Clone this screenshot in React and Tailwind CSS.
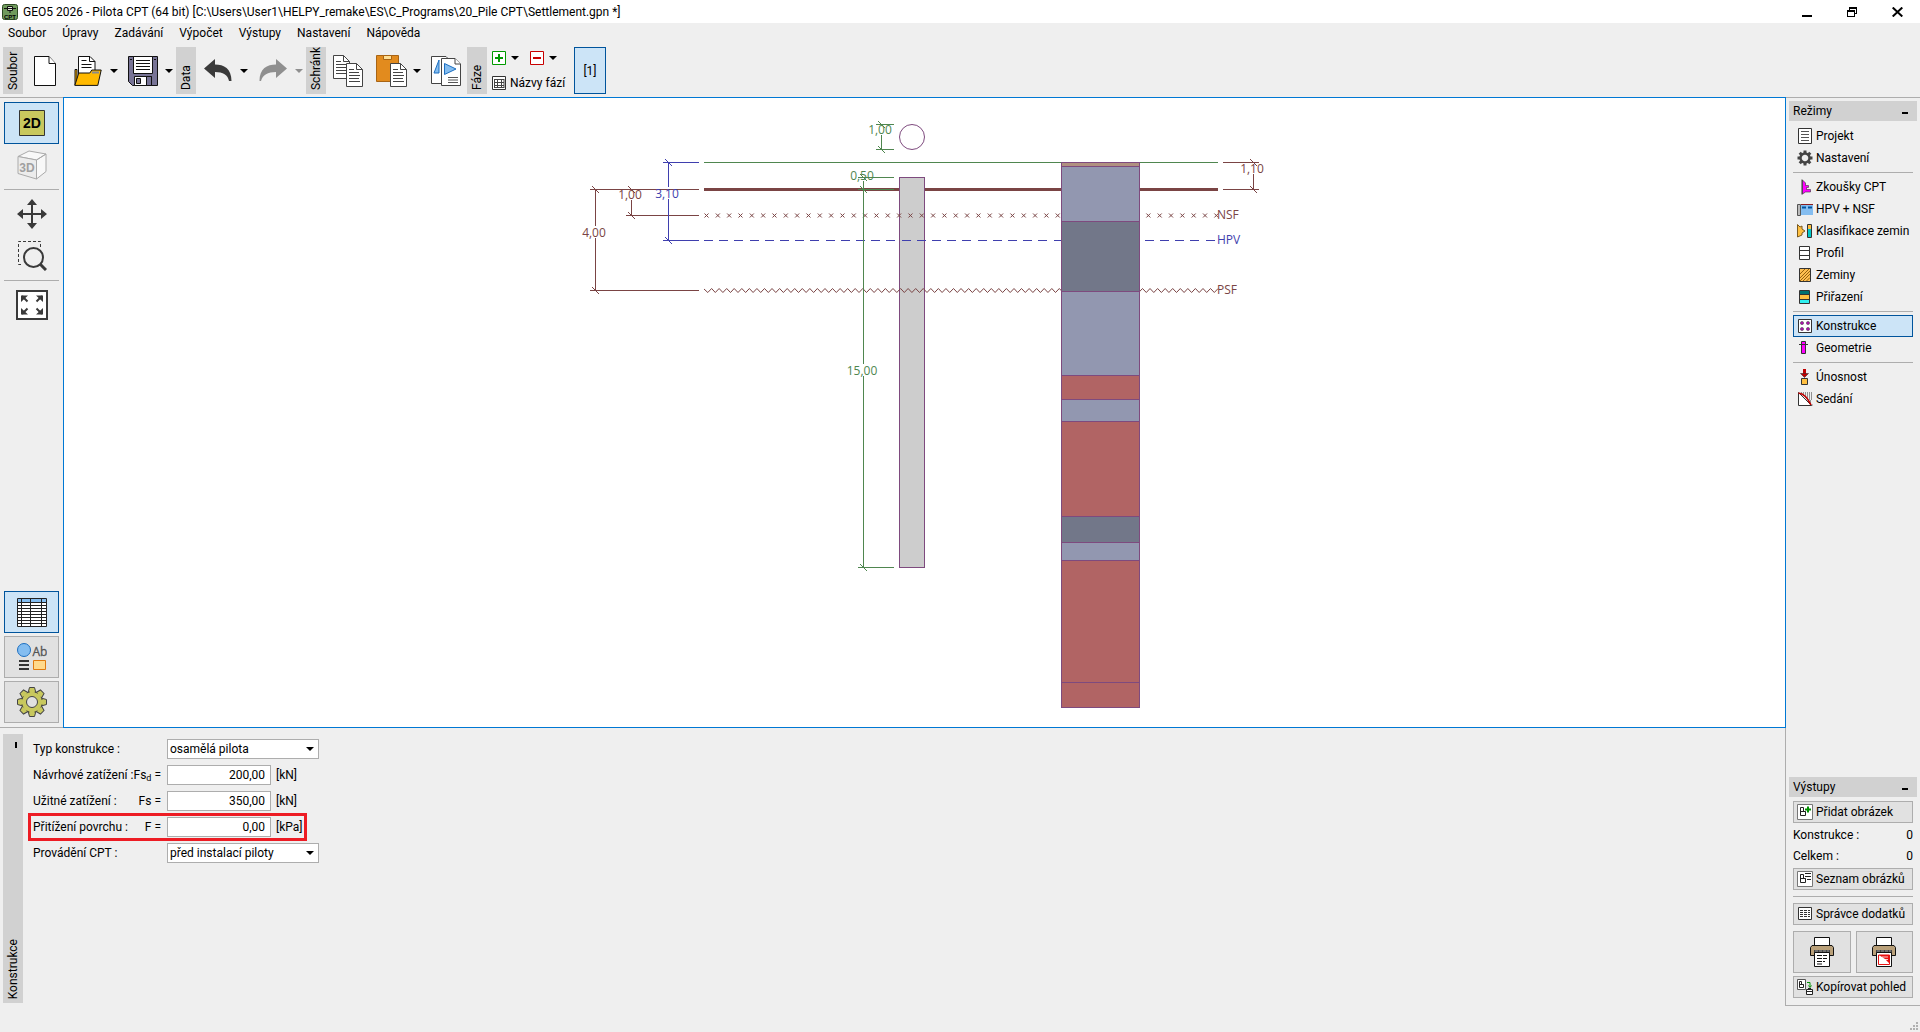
import { useState } from "react";

const menuItems = ["Soubor", "Úpravy", "Zadávání", "Výpočet", "Výstupy", "Nastavení", "Nápověda"];

const BROWN = "#7a4444";
const GREEN = "#4f864f";
const BLUE = "#3f3fae";
const PURPLE = "#7e4a7e";

/* ---------- toolbar icons ---------- */

const NewIcon = () => (
  <svg width="22" height="30" viewBox="0 0 22 30" aria-hidden="true">
    <path d="M.5.5H15l6.5 7v22H.5z" fill="#fff" stroke="#111" />
    <path d="M15 .5v7h6.5" fill="#fff" stroke="#111" />
  </svg>
);

const OpenIcon = () => (
  <svg width="28" height="30" viewBox="0 0 28 30" aria-hidden="true">
    <path d="M4.500.5H16l5 5V18H4.500z" fill="#fff" stroke="#111" />
    <path d="M15.500.5v5H21M7.500 4.500h5M7.500 8.500h10M7.500 11.500h10" fill="none" stroke="#111" />
    <path d="M1 13.500h2V27L1 29z" fill="#ffb200" stroke="#111" />
    <path d="M.8 29.400l4-12.400h11l2-3h9.400l-3.400 15.400z" fill="#ffb900" stroke="#111" />
    <path d="M18 16.500h7" stroke="#8a8a8a" strokeWidth="2" />
  </svg>
);

const SaveIcon = () => (
  <svg width="30" height="30" viewBox="0 0 30 30" aria-hidden="true">
    <path d="M.5.5h29v29H4.500l-4-4z" fill="#787496" stroke="#111" />
    <path d="M5.500.5h19v17h-19z" fill="#fff" stroke="#111" />
    <path d="M8 4.500h14M8 7.500h14M8 10.500h14M8 13.500h14" stroke="#111" />
    <path d="M6.500 20.500h17v9h-17z" fill="#fff" stroke="#111" />
    <path d="M18.500 20.500h5v9h-5z" fill="#787496" stroke="#111" />
    <path d="M8.500 22.500h4v5h-4z" fill="#787496" stroke="#111" />
    <path d="M2 3.500h2M26 3.500h2" stroke="#111" />
  </svg>
);

const UndoIcon = () => (
  <svg width="28" height="24" viewBox="0 0 28 24" aria-hidden="true">
    <path d="M0 9.500L11 0v5.500c9 0 16.500 4 16.500 16.500h-2.500C24 16 19 13 11 13v6z" fill="#3a3a3a" />
  </svg>
);

const RedoIcon = () => (
  <svg width="28" height="24" viewBox="0 0 28 24" aria-hidden="true">
    <path d="M28 9.500L17 0v5.500C8 5.500.5 9.500.5 22H2c1.500-6 7-9 15-9v6z" fill="#8f8f8f" />
  </svg>
);

const Sheet = ({ x, y }) => (
  <g transform={`translate(${x} ${y})`}>
    <path d="M.5.5h10l6 6v17H.5z" fill="#fff" stroke="#444" />
    <path d="M10.500.5v6h6M3 6.500h5M3 9.500h10M3 12.500h11M3 15.500h10M3 18.500h11" fill="none" stroke="#444" />
  </g>
);

const CopyIcon = () => (
  <svg width="30" height="32" viewBox="0 0 30 32" aria-hidden="true">
    <Sheet x={0} y={0} />
    <Sheet x={13} y={8} />
  </svg>
);

const PasteIcon = () => (
  <svg width="31" height="32" viewBox="0 0 31 32" aria-hidden="true">
    <path d="M.5.5h22v26H.5z" fill="#e28b1e" stroke="#a86414" />
    <path d="M7.500.5h8v4h-8z" fill="#ffdf94" stroke="#a86414" />
    <Sheet x={14} y={8} />
  </svg>
);

const GalleryIcon = () => (
  <svg width="30" height="30" viewBox="0 0 30 30" aria-hidden="true">
    <path d="M.5.5H15l5 5v22H.5z" fill="#fff" stroke="#444" />
    <path d="M3 17L8 4v13z" fill="#84bdf0" stroke="#1d6fc0" />
    <path d="M10.500 2.500H24l5.500 5.500v21.500h-19z" fill="#fff" stroke="#444" />
    <path d="M24 2.500V8h5.500" fill="#fff" stroke="#444" />
    <path d="M13.500 7.500v11L25 13z" fill="#84bdf0" stroke="#1d6fc0" />
    <path d="M17 21.500h10M17 24h10M17 26.500h10" stroke="#555" />
  </svg>
);

const Caret = ({ color = "#000" }) => (
  <svg width="8" height="4" viewBox="0 0 8 4" aria-hidden="true">
    <path d="M0 0h8L4 4z" fill={color} />
  </svg>
);

const PhaseSign = ({ color, plus }) => (
  <svg width="14" height="14" viewBox="0 0 14 14" aria-hidden="true">
    <path d="M.5.5h13v13H.5z" fill="#fff" stroke={color} />
    <path d={plus ? "M3 7h8M7 3v8" : "M3 7h8"} stroke={color} strokeWidth="2" />
  </svg>
);

const TableIcon = () => (
  <svg width="14" height="14" viewBox="0 0 14 14" aria-hidden="true">
    <path d="M.5.5h13v13H.5z" fill="#fff" stroke="#333" />
    <path d="M2 3.500h10M2 6.500h10M2 9.500h10M2.500 3v9M5.500 3v9M9.500 3v9M12 3v9M2 11.500h10" stroke="#444" />
  </svg>
);

/* ---------- left bar icons ---------- */

const View2D = () => (
  <svg width="26" height="26" viewBox="0 0 26 26" aria-hidden="true">
    <path d="M.5.5h25v25H.5z" fill="#c8c85e" stroke="#333" />
    <text x="13" y="18" textAnchor="middle" fontSize="14" fontWeight="700" fontFamily="Liberation Sans, sans-serif">2D</text>
  </svg>
);

const View3D = () => (
  <svg width="30" height="30" viewBox="0 0 30 30" aria-hidden="true">
    <path d="M1 6.500L12 1l17 3-9.500 6zM19.500 10L29 4v17.500L19.500 29z" fill="#f8f8f8" stroke="#aaa" />
    <path d="M1 6.500l18.500 3.500v19L1 23.500z" fill="#ececec" stroke="#aaa" />
    <text x="10" y="22" textAnchor="middle" fontSize="12" fontWeight="700" fill="#a0a0a0" fontFamily="Liberation Sans, sans-serif">3D</text>
  </svg>
);

const MoveIcon = () => (
  <svg width="30" height="30" viewBox="0 0 30 30" aria-hidden="true">
    <path d="M15 4v22M4 15h22" stroke="#3a3a3a" strokeWidth="2" />
    <path d="M15 0l5 6H10zM15 30l5-6H10zM0 15l6-5v10zM30 15l-6-5v10z" fill="#3a3a3a" />
  </svg>
);

const ZoomIcon = () => (
  <svg width="30" height="30" viewBox="0 0 30 30" aria-hidden="true">
    <path d="M23.500 6V.5H1.500v23H6" fill="none" stroke="#3a3a3a" strokeDasharray="3 2" />
    <circle cx="16.500" cy="16.500" r="9.500" fill="none" stroke="#3a3a3a" strokeWidth="2" />
    <path d="M23 23l6 6" stroke="#3a3a3a" strokeWidth="3" />
  </svg>
);

const FitIcon = () => (
  <svg width="32" height="30" viewBox="0 0 32 30" aria-hidden="true">
    <path d="M1 1h30v28H1z" fill="#fff" stroke="#3a3a3a" strokeWidth="2" />
    <path d="M6 6l5.500 5.500M26 6l-5.500 5.500M6 24l5.500-5.500M26 24l-5.500-5.500" stroke="#3a3a3a" strokeWidth="2" />
    <path d="M5 5.500h7L5 12zM27 5.500h-7l7 6.500zM5 24.500h7L5 18zM27 24.500h-7l7-6.500z" fill="#3a3a3a" />
  </svg>
);

const GridIcon = () => (
  <svg width="30" height="29" viewBox="0 0 30 29" aria-hidden="true">
    <path d="M.5.5h29v28H.5z" fill="#fff" stroke="#222" />
    <path d="M1 1h28v3.500H1z" fill="#84bdf0" />
    <path d="M0 4.500h30M0 7.500h30M0 10.500h30M0 13.500h30M0 16.500h30M0 19.500h30M0 22.500h30M0 25.500h30M4.500 0v29M13.500 0v29M24.500 0v29" stroke="#222" />
  </svg>
);

const StyleIcon = () => (
  <svg width="30" height="28" viewBox="0 0 30 28" aria-hidden="true">
    <circle cx="7" cy="7" r="6.500" fill="#84bdf0" stroke="#1d6fc0" />
    <text x="15.500" y="13" fontSize="12" fill="#555" stroke="#555" strokeWidth=".3" fontFamily="Open Sans, sans-serif">Ab</text>
    <path d="M2 18h10M2 22h10M2 26h10" stroke="#333" strokeWidth="2" />
    <path d="M16.500 17.500h12v9h-12z" fill="#ffd98c" stroke="#e07a10" />
  </svg>
);

const gearTeeth = [0, 45, 90, 135, 180, 225, 270, 315];

const GearIcon = () => (
  <svg width="30" height="30" viewBox="-15 -15 30 30" aria-hidden="true">
    {gearTeeth.map((a) => (
      <path key={a} d="M-4-9l1.500-5.500h5L4-9z" transform={`rotate(${a})`} fill="#c8c85e" stroke="#444" />
    ))}
    <circle r="10.300" fill="#c8c85e" stroke="#444" strokeDasharray="3.200 4.890" strokeDashoffset="-2.400" />
    <circle r="9.700" fill="#c8c85e" />
    <circle r="5.500" fill="#e1e1e1" stroke="#444" />
  </svg>
);

/* ---------- mode icons, all on a 16px box ---------- */

const modeIcons = {
  project: (
    <>
      <path d="M1.500.5h13v15h-13z" fill="#fff" stroke="#333" />
      <path d="M4 3.500h8M4 6.500h8M4 9.500h8M4 12.500h8" stroke="#555" />
    </>
  ),
  settings: (
    <g transform="translate(8 8)">
      {gearTeeth.map((a) => (
        <path key={a} d="M-1.500-7.500h3v4h-3z" transform={`rotate(${a})`} fill="#444" />
      ))}
      <circle r="4.500" fill="#efefef" stroke="#444" strokeWidth="2.400" />
    </g>
  ),
  cpt: (
    <>
      <path d="M5.500 1l3 3v2.500h3v2H9.500v2h4v2.500h-5l-3 2z" fill="#f0f" stroke="#333" strokeWidth=".6" />
      <path d="M5 .5v15" stroke="#333" strokeWidth="1" />
    </>
  ),
  water: (
    <>
      <path d="M4 4h12v10H4z" fill="#84bdf0" />
      <path d="M4 3.500h12" stroke="#8c1c1c" />
      <path d="M5 6.500h11" stroke="#0054a0" strokeWidth="2" strokeDasharray="4 2" />
      <path d="M.5 3.500h3v11h-3z" fill="#bbb" stroke="#555" />
    </>
  ),
  classify: (
    <>
      <path d="M.5 1.500L3 4l2-1v3l3 2-3 2v2l-4.500 2z" fill="#ffc040" stroke="#7a5a20" />
      <path d="M11 2h4v12h-4z" fill="#00c8c8" />
      <path d="M11 2h4v4h-4z" fill="#ffc040" />
      <path d="M10.500 1.500h4v13h-4z" fill="none" stroke="#333" />
    </>
  ),
  profile: <path d="M2.500 1.500h10v13h-10zM2.500 5.500h10M2.500 10.500h10" fill="#fff" stroke="#333" />,
  soils: (
    <>
      <path d="M2.500 1.500h11v13h-11z" fill="#ffbf50" stroke="#333" />
      <path d="M3 7l5-5M3 11l9-9M3 14l10-10M6 14l7-7M9.500 14l3.500-3.500" stroke="#7a4a00" strokeWidth=".8" />
    </>
  ),
  assign: (
    <>
      <path d="M3 2h9v4H3z" fill="#007070" />
      <path d="M3 6h9v4H3z" fill="#ffc040" />
      <path d="M3 10h9v4H3z" fill="#30f0f0" />
      <path d="M2.500 1.500h10v13h-10zM2.500 5.500h10M2.500 10.500h10" fill="none" stroke="#333" />
    </>
  ),
  structure: (
    <>
      <path d="M1.500 1.500h13v13h-13z" fill="#fff" stroke="#333" />
      <g fill="#b010b0" stroke="#333" strokeWidth=".5">
        <circle cx="5" cy="5" r="1.600" />
        <circle cx="11" cy="5" r="1.600" />
        <circle cx="5" cy="11" r="1.600" />
        <circle cx="11" cy="11" r="1.600" />
      </g>
    </>
  ),
  geometry: (
    <>
      <path d="M4.500 1.500h4v12h-4z" fill="#f0f" stroke="#333" />
      <path d="M2 4.500h9" stroke="#333" />
    </>
  ),
  bearing: (
    <>
      <path d="M7.500 0v6" stroke="#c00000" strokeWidth="3" />
      <path d="M3.500 4.500h8l-4 4z" fill="#c00000" stroke="#333" strokeWidth=".6" />
      <path d="M4.500 9.500h6v6h-6z" fill="#ffbf40" stroke="#333" />
    </>
  ),
  settlement: (
    <>
      <path d="M1.500 1.500v13h13z" fill="#fff" stroke="#333" />
      <path d="M4 2h11M6 4h9M8 6h7M10 8h5M11 10h4M13 12h2M14.500 14h1" stroke="#333" strokeDasharray="1 1" />
      <path d="M1.500 2c6 1 9 5 12.500 12" fill="none" stroke="#c00000" strokeWidth="1.600" />
    </>
  ),
  addPicture: (
    <>
      <path d="M.5.5h15v15H.5z" fill="#fff" stroke="#777" />
      <path d="M3.500 3.500h3v4h2v4h-5zM3.500 7.500h5" fill="none" stroke="#222" />
      <path d="M8 5.500h6M11 2.500v6" stroke="#009000" strokeWidth="2" />
    </>
  ),
  list: (
    <>
      <path d="M.5.5h15v15H.5z" fill="#fff" stroke="#777" />
      <path d="M3.500 3.500h3v4h2v4h-5zM3.500 7.500h5M8 2.500h6M8 5.500h6M10 8.500h4" fill="none" stroke="#222" />
    </>
  ),
  annex: (
    <>
      <path d="M1.500 1.500h13v12h-13z" fill="#fff" stroke="#333" />
      <path d="M3 4.500h10M3 6.500h10M3 8.500h10M3 10.500h10" stroke="#333" strokeDasharray="3 1" />
    </>
  ),
  copyView: (
    <>
      <path d="M.5.5h8v10h-8z" fill="#fff" stroke="#555" />
      <path d="M2.500 2.500h2v3h2v3h-4zM2.500 5.500h4" fill="none" stroke="#222" />
      <path d="M10 3.500h3v4M11.500 6.500l1.500 2 1.500-2" fill="none" stroke="#009000" />
      <path d="M9.500 10.500h6v5h-6zM9.500 12.500h6M11 9.500h3" fill="#fff" stroke="#222" />
    </>
  ),
};

const ModeIcon = ({ name }) => (
  <svg width="16" height="16" viewBox="0 0 16 16" className="shrink-0" aria-hidden="true">
    {modeIcons[name]}
  </svg>
);

const PrinterIcon = ({ red }) => (
  <svg width="24" height="30" viewBox="0 0 24 30" aria-hidden="true">
    <path d="M4.500.5h15v9h-15z" fill="#fff" stroke="#111" />
    <path d="M2 8.500h20l1.500 2v8h-23v-8z" fill="#b9a079" stroke="#111" />
    <path d="M4 13h16v5H4z" fill="#444" />
    <path d="M5 14h14" stroke="#999" strokeDasharray="3 1" />
    <path d="M4.500 15.500h15v14h-15z" fill="#fff" stroke="#111" />
    {red ? (
      <>
        <path d="M6.500 18v9.500h11V18z" fill="none" stroke="#e81010" />
        <path d="M7 18h10.500v8.500L13 22z" fill="#e81010" />
        <path d="M10 20h6M12 22.500h4" stroke="#fff" strokeWidth=".8" />
      </>
    ) : (
      <path d="M7 18.500h10M7 21.500h10M7 24.500h8M7 27h6" stroke="#111" strokeDasharray="5 1" />
    )}
  </svg>
);

const modeGroups = [
  [
    { icon: "project", label: "Projekt" },
    { icon: "settings", label: "Nastavení" },
  ],
  [
    { icon: "cpt", label: "Zkoušky CPT" },
    { icon: "water", label: "HPV + NSF" },
    { icon: "classify", label: "Klasifikace zemin" },
    { icon: "profile", label: "Profil" },
    { icon: "soils", label: "Zeminy" },
    { icon: "assign", label: "Přiřazení" },
  ],
  [
    { icon: "structure", label: "Konstrukce" },
    { icon: "geometry", label: "Geometrie" },
  ],
  [
    { icon: "bearing", label: "Únosnost" },
    { icon: "settlement", label: "Sedání" },
  ],
];

/* ---------- drawing ---------- */

const layers = [
  { top: 162, bottom: 166, fill: "#b09080" },
  { top: 166, bottom: 221, fill: "#9297b0" },
  { top: 221, bottom: 291, fill: "#727789" },
  { top: 291, bottom: 375, fill: "#9297b0" },
  { top: 375, bottom: 399, fill: "#b16464" },
  { top: 399, bottom: 421, fill: "#9297b0" },
  { top: 421, bottom: 516, fill: "#b16464" },
  { top: 516, bottom: 542, fill: "#727789" },
  { top: 542, bottom: 560, fill: "#9297b0" },
  { top: 560, bottom: 682, fill: "#b16464" },
  { top: 682, bottom: 707, fill: "#b16464" },
];

// vertical dimension: x of the line, ends y1/y2, extension lines from x-5 to `to`
const dimensions = [
  { x: 595, y1: 189, y2: 290, to: 699, text: "4,00", ty: 237, color: BROWN },
  { x: 631, y1: 189, y2: 215, to: 699, text: "1,00", ty: 199, color: BROWN },
  { x: 668, y1: 162, y2: 240, to: 699, text: "3,10", ty: 198, color: BLUE },
  { x: 881, y1: 124, y2: 149, to: 894, text: "1,00", ty: 134, color: GREEN },
  { x: 863, y1: 177, y2: 189, to: 894, text: "0,50", ty: 180, color: GREEN },
  { x: 863, y1: 189, y2: 567, to: 894, text: "15,00", ty: 375, color: GREEN },
];

const Tick = ({ x, y, color }) => (
  <path d={`M${x - 3} ${y - 3}l7 7`} stroke={color} fill="none" />
);

const Dimension = ({ x, y1, y2, to, text, ty, color }) => (
  <g>
    <path d={`M${x + 0.5} ${y1}V${Math.max(ty - 11, y1)}M${x + 0.5} ${ty + 1}V${Math.max(y2, ty + 1)}`} stroke={color} shapeRendering="crispEdges" />
    <path d={`M${x - 5} ${y1 + 0.5}H${to}M${x - 5} ${y2 + 0.5}H${to}`} stroke={color} shapeRendering="crispEdges" />
    <Tick x={x} y={y1} color={color} />
    <Tick x={x} y={y2} color={color} />
    <text x={x - 1} y={ty} textAnchor="middle" fill={color}>{text}</text>
  </g>
);

const crosses = Array.from({ length: 46 }, (_, i) => 706.5 + i * 11.33)
  .map((x) => `M${x - 2} 213.500l4 4M${x - 2} 217.500l4-4`)
  .join("");

const zigzag =
  "M704 289" +
  Array.from({ length: 68 }, (_, i) => `L${(704 + (i * 2 + 1) * 3.78).toFixed(1)} 292.500L${(704 + (i * 2 + 2) * 3.78).toFixed(1)} 288.500`).join("");

const Drawing = () => (
  <svg viewBox="64 98 1721 629" className="block h-full w-full" fontSize="12" fontFamily="Open Sans, sans-serif" role="img" aria-label="Konstrukce">
    <g shapeRendering="crispEdges">
      <path d="M704 162.500H1218" stroke={GREEN} />
      <path d="M704 189.500H1218" stroke={BROWN} strokeWidth="3" />
      <path d="M899.500 177.500h25v390h-25z" fill="#cdcdcd" stroke={PURPLE} />
      <path d="M704 240.500H1218" stroke={BLUE} strokeDasharray="9 6.200" />
    </g>
    <circle cx="912" cy="137" r="12.500" fill="#fff" stroke={PURPLE} />
    <path d={crosses} stroke={BROWN} />
    <path d={zigzag} fill="none" stroke={BROWN} />

    {dimensions.map((d) => (
      <Dimension key={`${d.x}-${d.text}`} {...d} />
    ))}

    <g shapeRendering="crispEdges">
      {layers.map((l) => (
        <rect key={l.top} x="1061.5" y={l.top + 0.5} width="78" height={l.bottom - l.top} fill={l.fill} stroke={PURPLE} />
      ))}
      <path d="M1223 162.500h36M1223 189.500h36M1253.500 174v15" stroke={BROWN} />
    </g>
    <Tick x={1253} y={162} color={BROWN} />
    <Tick x={1253} y={189} color={BROWN} />
    <text x="1252" y="173" textAnchor="middle" fill={BROWN}>1,10</text>
    <text x="1217" y="219" fill={BROWN}>NSF</text>
    <text x="1217" y="244" fill={BLUE}>HPV</text>
    <text x="1217" y="294" fill={BROWN}>PSF</text>
  </svg>
);

/* ---------- building blocks ---------- */

const VerticalTab = ({ children }) => (
  <div className="flex w-5 shrink-0 justify-center bg-[#d1d1d1]">
    <span className="rotate-180 pt-1 leading-5 whitespace-nowrap [writing-mode:vertical-rl]">{children}</span>
  </div>
);

const ToolButton = ({ label, children, menu, disabled }) => (
  <div className="flex">
    <button type="button" aria-label={label} disabled={disabled} className="flex w-10 items-center justify-center">
      {children}
    </button>
    {menu && (
      <button type="button" aria-label={`${label} – nabídka`} disabled={disabled} className="flex w-3 items-center justify-center">
        <Caret color={disabled ? "#8f8f8f" : "#000"} />
      </button>
    )}
  </div>
);

const ToolGroup = ({ title, children }) => (
  <>
    <VerticalTab>{title}</VerticalTab>
    <div className="flex gap-[3px] pr-px pl-[2px]">{children}</div>
  </>
);

const SideButton = ({ label, active, framed, children }) => (
  <button
    type="button"
    aria-label={label}
    className={`flex h-[42px] w-full shrink-0 items-center justify-center border ${
      active ? "border-[#00549c] bg-[#cce4f7]" : framed ? "border-[#adadad] bg-[#e1e1e1]" : "border-transparent"
    }`}
  >
    {children}
  </button>
);

const PanelHeader = ({ children }) => (
  <div className="flex h-5 shrink-0 items-center justify-between bg-[#d1d1d1] px-1">
    <h2>{children}</h2>
    <button type="button" aria-label={`Sbalit ${children}`} className="flex h-5 w-4 items-center justify-center pt-1">
      <span className="h-[2px] w-[6px] bg-black" />
    </button>
  </div>
);

const OutputButton = ({ icon, children }) => (
  <button type="button" className="flex h-[22px] w-full items-center gap-[3px] border border-[#adadad] bg-[#e1e1e1] pl-[3px] whitespace-nowrap">
    <ModeIcon name={icon} />
    {children}
  </button>
);

const SelectField = ({ id, label, options }) => (
  <div className="flex h-5 items-center pl-[5px]">
    <label htmlFor={id} className="w-[134px]">{label}</label>
    <div className="relative">
      <select id={id} className="block h-5 w-[152px] appearance-none border border-[#adadad] bg-white pl-[2px] leading-4">
        {options.map((o) => (
          <option key={o}>{o}</option>
        ))}
      </select>
      <span className="pointer-events-none absolute top-2 right-[5px]">
        <Caret />
      </span>
    </div>
  </div>
);

const NumberField = ({ id, label, symbol, unit, initial, marked }) => {
  const [value, setValue] = useState(initial);
  return (
    <div className="relative flex h-5 items-center pl-[5px]">
      {marked && <div className="pointer-events-none absolute -inset-y-1 left-0 w-[279px] border-3 border-[#ed1c24]" />}
      <label htmlFor={id} className="flex w-[134px] justify-between pr-[6px] whitespace-nowrap">
        <span>{label}</span>
        <span>{symbol} =</span>
      </label>
      <input
        id={id}
        value={value}
        onChange={(e) => setValue(e.target.value)}
        className="h-5 w-[104px] border border-[#adadad] bg-white pr-[5px] text-right"
      />
      <span className="pl-[5px]">{unit}</span>
    </div>
  );
};

const App = () => {
  const [activeMode, setActiveMode] = useState("Konstrukce");

  return (
    <div className="flex min-h-screen flex-col bg-[#efefef] font-[Roboto,sans-serif] text-[12px] leading-4 text-black">
      <header className="flex h-[23px] items-center justify-between bg-white pr-[17px] pl-[2px]">
        <div className="flex items-center gap-[5px]">
          <svg width="16" height="16" viewBox="0 0 16 16" aria-hidden="true">
            <rect x=".5" y=".5" width="15" height="15" rx="2" fill="#6f9a5c" stroke="#2c4a22" />
            <path d="M2 4.500h12M5.500 2.500h5v4h-5zM8 6.500V9" fill="#dfe8d8" stroke="#111" />
            <text x="8" y="14.500" textAnchor="middle" fontSize="6" fontWeight="700" fontFamily="Liberation Sans, sans-serif">CPT</text>
          </svg>
          <h1>GEO5 2026 - Pilota CPT (64 bit) [C:\Users\User1\HELPY_remake\ES\C_Programs\20_Pile CPT\Settlement.gpn *]</h1>
        </div>
        <div className="flex items-center gap-[35px]">
          <button type="button" aria-label="Minimalizovat">
            <svg width="10" height="10" viewBox="0 0 10 10"><path d="M0 9h10" stroke="#000" strokeWidth="2" /></svg>
          </button>
          <button type="button" aria-label="Obnovit">
            <svg width="10" height="10" viewBox="0 0 10 10" shapeRendering="crispEdges">
              <path d="M.5 3.500h7v6h-7zM.5 4h7M2.500 3V.5h7v6H8M2.500 1h7" fill="none" stroke="#000" />
            </svg>
          </button>
          <button type="button" aria-label="Zavřít">
            <svg width="11" height="10" viewBox="0 0 11 10"><path d="M.7.5l9.600 9M10.300.5l-9.600 9" stroke="#000" strokeWidth="2" /></svg>
          </button>
        </div>
      </header>

      <nav className="flex h-5 items-center gap-4 pl-2">
        {menuItems.map((item) => (
          <button type="button" key={item}>{item}</button>
        ))}
      </nav>

      <div className="flex h-[54px] pt-1 pb-[3px] pl-[3px]">
        <ToolGroup title="Soubor">
          <ToolButton label="Nový"><NewIcon /></ToolButton>
          <ToolButton label="Otevřít" menu><OpenIcon /></ToolButton>
          <ToolButton label="Uložit" menu><SaveIcon /></ToolButton>
        </ToolGroup>
        <ToolGroup title="Data">
          <ToolButton label="Zpět" menu><UndoIcon /></ToolButton>
          <ToolButton label="Znovu" menu disabled><RedoIcon /></ToolButton>
        </ToolGroup>
        <ToolGroup title="Schránk">
          <ToolButton label="Kopírovat"><CopyIcon /></ToolButton>
          <ToolButton label="Vložit" menu><PasteIcon /></ToolButton>
          <ToolButton label="Vložit obrázek"><GalleryIcon /></ToolButton>
        </ToolGroup>
        <VerticalTab>Fáze</VerticalTab>
        <div className="flex w-[87px] flex-col justify-between pt-1 pb-[3px] pl-[5px]">
          <div className="flex items-center gap-[5px]">
            <button type="button" aria-label="Přidat fázi"><PhaseSign color="#009a00" plus /></button>
            <button type="button" aria-label="Přidat fázi – nabídka" className="mr-[6px]"><Caret /></button>
            <button type="button" aria-label="Odebrat fázi"><PhaseSign color="#c80000" /></button>
            <button type="button" aria-label="Odebrat fázi – nabídka"><Caret /></button>
          </div>
          <button type="button" className="flex items-center gap-1 whitespace-nowrap">
            <TableIcon />
            Názvy fází
          </button>
        </div>
        <button type="button" className="w-8 border border-[#00549c] bg-[#cce4f7]">[1]</button>
      </div>

      <div className="flex grow">
        <div className="flex min-w-0 grow flex-col">
          <div className="flex grow">
            <aside className="flex w-[63px] shrink-0 flex-col border-y border-[#adadad] px-1 pt-1 pb-1">
              <SideButton label="2D" active><View2D /></SideButton>
              <SideButton label="3D"><View3D /></SideButton>
              <hr className="my-[3px] border-[#adadad]" />
              <SideButton label="Posun"><MoveIcon /></SideButton>
              <SideButton label="Lupa"><ZoomIcon /></SideButton>
              <hr className="my-[3px] border-[#adadad]" />
              <SideButton label="Celý výkres"><FitIcon /></SideButton>
              <div className="mt-auto flex flex-col gap-[3px]">
                <SideButton label="Tabulka" active><GridIcon /></SideButton>
                <SideButton label="Styl kreslení" framed><StyleIcon /></SideButton>
                <SideButton label="Nastavení vizualizace" framed><GearIcon /></SideButton>
              </div>
            </aside>
            <main className="min-w-0 grow border border-[#0078d4] bg-white">
              <Drawing />
            </main>
          </div>

          <section className="flex h-[278px] shrink-0 border-r border-[#adadad] pt-[6px] pb-[3px] pl-[3px]">
            <div className="flex w-5 flex-col items-center justify-between bg-[#d1d1d1] pt-2 pb-1">
              <button type="button" aria-label="Sbalit panel" className="ml-[6px] h-[6px] w-[2px] bg-black" />
              <span className="rotate-180 leading-5 [writing-mode:vertical-rl]">Konstrukce</span>
            </div>
            <form className="flex flex-col gap-[6px] pt-[5px] pl-[5px]">
              <SelectField id="typ" label="Typ konstrukce :" options={["osamělá pilota"]} />
              <NumberField id="fsd" label="Návrhové zatížení :" symbol={<>Fs<sub className="text-[9px]">d</sub></>} unit="[kN]" initial="200,00" />
              <NumberField id="fs" label="Užitné zatížení :" symbol="Fs" unit="[kN]" initial="350,00" />
              <NumberField id="f" label="Přitížení povrchu :" symbol="F" unit="[kPa]" initial="0,00" marked />
              <SelectField id="cpt" label="Provádění CPT :" options={["před instalací piloty"]} />
            </form>
          </section>
        </div>

        <aside className="flex w-[134px] shrink-0 flex-col justify-between border-y border-[#adadad] pt-[3px] pr-[3px] pb-[7px] pl-[3px]">
          <section>
            <PanelHeader>Režimy</PanelHeader>
            <div className="mt-1 mr-1 ml-1">
              {modeGroups.map((group, i) => (
                <div key={i} className={i > 0 ? "mt-[3px] border-t border-[#adadad] pt-[3px]" : ""}>
                  {group.map((mode) => (
                    <button
                      type="button"
                      key={mode.label}
                      onClick={() => setActiveMode(mode.label)}
                      className={`flex h-[22px] w-full items-center gap-[3px] border pl-[3px] whitespace-nowrap ${
                        activeMode === mode.label ? "border-[#00549c] bg-[#cce4f7]" : "border-transparent"
                      }`}
                    >
                      <ModeIcon name={mode.icon} />
                      {mode.label}
                    </button>
                  ))}
                </div>
              ))}
            </div>
          </section>

          <section>
            <PanelHeader>Výstupy</PanelHeader>
            <div className="mx-1 mt-1">
              <OutputButton icon="addPicture">Přidat obrázek</OutputButton>
              <dl className="py-[1px]">
                <div className="flex h-[21px] items-center justify-between"><dt>Konstrukce :</dt><dd>0</dd></div>
                <div className="flex h-[22px] items-center justify-between"><dt>Celkem :</dt><dd>0</dd></div>
              </dl>
              <OutputButton icon="list">Seznam obrázků</OutputButton>
              <hr className="my-[6px] border-[#adadad]" />
              <OutputButton icon="annex">Správce dodatků</OutputButton>
              <div className="my-[6px] mb-[3px] grid grid-cols-2 gap-[5px]">
                <SideButton label="Tisk" framed><PrinterIcon /></SideButton>
                <SideButton label="Tisk do PDF" framed><PrinterIcon red /></SideButton>
              </div>
              <OutputButton icon="copyView">Kopírovat pohled</OutputButton>
            </div>
          </section>
        </aside>
      </div>

      <footer className="flex h-[26px] items-end justify-end pr-[2px] pb-[2px]">
        <svg width="8" height="8" viewBox="0 0 8 8" aria-hidden="true">
          <path d="M6 0h2v2H6zM3 3h2v2H3zM6 3h2v2H6zM0 6h2v2H0zM3 6h2v2H3zM6 6h2v2H6z" fill="#b0b0b0" />
        </svg>
      </footer>
    </div>
  );
};

export default App;
